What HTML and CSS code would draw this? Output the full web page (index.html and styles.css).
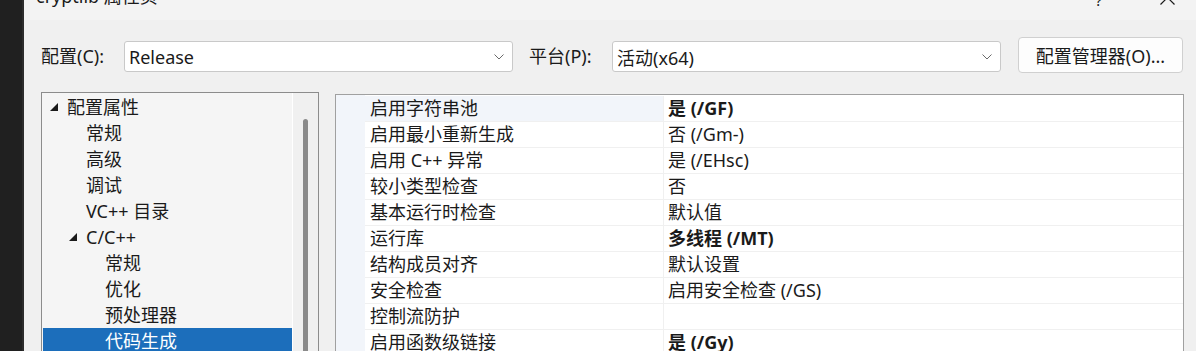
FILE: index.html
```html
<!DOCTYPE html>
<html lang="zh-CN">
<head>
    <meta charset="UTF-8">
    <title>cryptlib 属性页</title>
    <link rel="stylesheet" href="styles.css">
</head>
<body>
    <div class="desk"></div>
    <div class="dialog">
        <div class="titlebar">
            <span class="title">cryptlib 属性页</span>
            <span class="tb-help">?</span>
            <svg class="tb-close" width="15" height="15" viewBox="0 0 15 15">
                <path d="M0.5 0.5 L14.5 14.5 M14.5 0.5 L0.5 14.5" stroke="#1a1a1a" stroke-width="1.2" fill="none"/>
            </svg>
        </div>

        <div class="config-row">
            <label class="field-label">配置(C):</label>
            <div class="select-box">
                <span>Release</span>
                <svg class="chevron" width="10" height="6" viewBox="0 0 10 6"><polyline points="0.5,0.5 5,5 9.5,0.5" fill="none" stroke="#6a6a6a" stroke-width="1"/></svg>
            </div>
            <label class="field-label">平台(P):</label>
            <div class="select-box">
                <span>活动(x64)</span>
                <svg class="chevron" width="10" height="6" viewBox="0 0 10 6"><polyline points="0.5,0.5 5,5 9.5,0.5" fill="none" stroke="#6a6a6a" stroke-width="1"/></svg>
            </div>
            <button class="btn">配置管理器(O)...</button>
        </div>

        <div class="main">
            <div class="tree">
                <ul class="tree-list">
                    <li class="node lv0"><span class="toggle"><svg width="9" height="9" viewBox="0 0 9 9"><polygon points="8,0 8,8 0,8" fill="#1a1a1a"/></svg></span>配置属性</li>
                    <li class="node lv1"><span class="toggle"></span>常规</li>
                    <li class="node lv1"><span class="toggle"></span>高级</li>
                    <li class="node lv1"><span class="toggle"></span>调试</li>
                    <li class="node lv1"><span class="toggle"></span>VC++ 目录</li>
                    <li class="node lv1 open"><span class="toggle"><svg width="9" height="9" viewBox="0 0 9 9"><polygon points="8,0 8,8 0,8" fill="#1a1a1a"/></svg></span>C/C++</li>
                    <li class="node lv2"><span class="toggle"></span>常规</li>
                    <li class="node lv2"><span class="toggle"></span>优化</li>
                    <li class="node lv2"><span class="toggle"></span>预处理器</li>
                    <li class="node lv2 selected"><span class="toggle"></span>代码生成</li>
                </ul>
                <div class="scrollbar">
                    <div class="thumb"></div>
                </div>
            </div>

            <div class="grid">
                <div class="row current"><div class="gutter"></div><div class="name">启用字符串池</div><div class="value strong">是 (/GF)</div></div>
                <div class="row"><div class="gutter"></div><div class="name">启用最小重新生成</div><div class="value">否 (/Gm-)</div></div>
                <div class="row"><div class="gutter"></div><div class="name">启用 C++ 异常</div><div class="value">是 (/EHsc)</div></div>
                <div class="row"><div class="gutter"></div><div class="name">较小类型检查</div><div class="value">否</div></div>
                <div class="row"><div class="gutter"></div><div class="name">基本运行时检查</div><div class="value">默认值</div></div>
                <div class="row"><div class="gutter"></div><div class="name">运行库</div><div class="value strong">多线程 (/MT)</div></div>
                <div class="row"><div class="gutter"></div><div class="name">结构成员对齐</div><div class="value">默认设置</div></div>
                <div class="row"><div class="gutter"></div><div class="name">安全检查</div><div class="value">启用安全检查 (/GS)</div></div>
                <div class="row"><div class="gutter"></div><div class="name">控制流防护</div><div class="value"></div></div>
                <div class="row"><div class="gutter"></div><div class="name">启用函数级链接</div><div class="value strong">是 (/Gy)</div></div>
            </div>
        </div>
    </div>
</body>
</html>
```

FILE: styles.css
```css
body {
    margin: 0;
    width: 1196px;
    height: 351px;
    overflow: hidden;
    display: flex;
    background-color: #f0f0f0;
    font-family: "Noto Sans", "Noto Sans CJK SC", sans-serif;
    font-size: 18px;
    color: #1a1a1a;
}
.desk {
    flex: none;
    width: 22px;
    background-color: #202020;
    border-right: 2px solid #2c2c2c;
}
.dialog {
    flex: 1;
    display: flex;
    flex-direction: column;
    min-width: 0;
}

/* 标题栏（上半部分被裁掉） */
.titlebar {
    flex: none;
    height: 20px;
    display: flex;
    overflow: hidden;
    padding: 0 21px 0 12px;
    background-color: #f3f3f3;
}
.title {
    margin-top: -16px;
    line-height: 24px;
    white-space: nowrap;
}
.tb-help {
    margin-left: auto;
    margin-top: -12px;
    line-height: 24px;
    font-size: 15px;
}
.tb-close {
    margin-left: 58px;
    margin-top: -10px;
    flex: none;
}

/* 配置 / 平台 */
.config-row {
    flex: none;
    display: flex;
    align-items: center;
    height: 36px;
    padding: 17px 0 0 17px;
}
.field-label {
    width: 83px;
    flex: none;
    white-space: nowrap;
}
.select-box {
    flex: none;
    box-sizing: border-box;
    width: 389px;
    height: 31px;
    margin: 3px 16px 0 0;
    padding: 0 8px 0 4px;
    display: flex;
    align-items: center;
    background-color: #fff;
    border: 1px solid #c9c9c9;
    border-radius: 3px;
}
.select-box .chevron {
    margin-left: auto;
    margin-top: 1px;
}
.btn {
    flex: none;
    box-sizing: border-box;
    width: 165px;
    height: 36px;
    margin-left: 1px;
    padding: 0;
    font: inherit;
    color: #1a1a1a;
    background-color: #fdfdfd;
    border: 1px solid #d0d0d0;
    border-radius: 4px;
}

.main {
    flex: 1;
    min-height: 0;
    display: flex;
    gap: 16px;
    margin-top: 19px;
    padding-left: 17px;
}

/* 左侧树 */
.tree {
    flex: none;
    box-sizing: border-box;
    width: 278px;
    display: flex;
    background-color: #f5f5f5;
    border: 1px solid #8c8c8c;
    border-bottom: none;
}
.tree-list {
    list-style: none;
    margin: 0;
    padding: 1px 0 0 1px;
    width: 249px;
    flex: none;
}
.node {
    height: 26px;
    line-height: 26px;
    display: flex;
    align-items: center;
    white-space: nowrap;
}
.node.lv0 { padding-left: 7px; }
.node.lv1 { padding-left: 26px; }
.node.lv2 { padding-left: 45px; }
.toggle {
    width: 17px;
    flex: none;
    display: flex;
    align-items: center;
    margin-top: 1px;
}
.node.selected {
    background-color: #1c6ebb;
    color: #fff;
}
.scrollbar {
    flex: 1;
    background-color: #f0f0f0;
    border-left: 1px solid #ffffff;
}
.thumb {
    width: 5px;
    height: 300px;
    margin: 26px 0 0 10px;
    background-color: #8a8a8a;
    border-radius: 3px;
}

/* 属性表格 */
.grid {
    flex: none;
    box-sizing: border-box;
    width: 849px;
    margin-top: 2px;
    padding-top: 1px;
    background-color: #fff;
    border: 1px solid #a0a0a0;
    border-bottom: none;
    background-image: linear-gradient(#f2f5fa, #f2f5fa);
    background-size: 29px 100%;
    background-repeat: no-repeat;
}
.row {
    display: flex;
    height: 26px;
}
.gutter {
    width: 29px;
    flex: none;
}
.name, .value {
    box-sizing: border-box;
    height: 26px;
    line-height: 25px;
    border-bottom: 1px solid #f0f0f0;
    white-space: nowrap;
}
.name {
    width: 298px;
    flex: none;
    padding-left: 5px;
}
.value {
    flex: 1;
    padding-left: 4px;
    border-left: 1px solid #f0f0f0;
}
.value.strong {
    font-weight: 700;
}
.row.current .name {
    background-color: #f2f5fa;
}
```
